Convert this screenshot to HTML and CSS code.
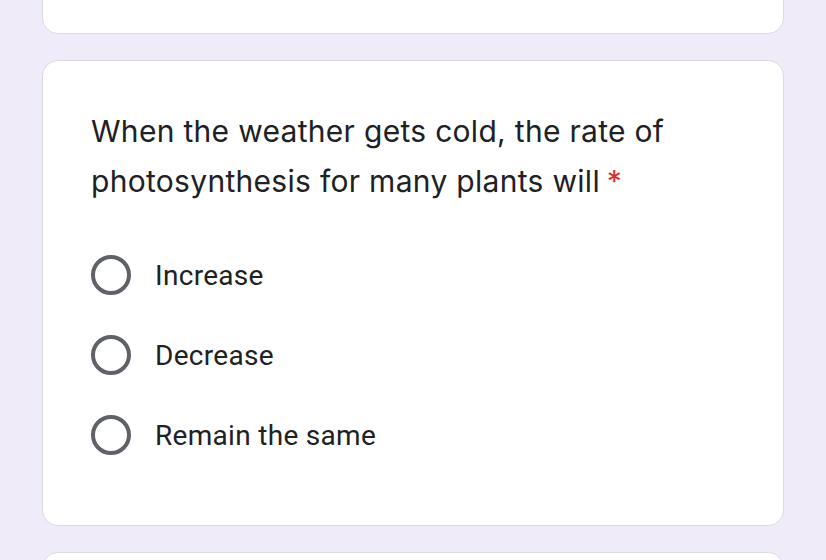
FILE: index.html
```html
<!DOCTYPE html>
<html>
<head>
<meta charset="utf-8">
<link rel="stylesheet" href="styles.css">
</head>
<body>
<main class="form">
  <div class="card card-prev"></div>
  <section class="card card-question">
    <h2 class="title">When the weather gets cold, the rate of photosynthesis for many plants will <span class="req">*</span></h2>
    <div class="options">
      <label class="option"><span class="radio"></span><span class="label">Increase</span></label>
      <label class="option"><span class="radio"></span><span class="label">Decrease</span></label>
      <label class="option"><span class="radio"></span><span class="label">Remain the same</span></label>
    </div>
  </section>
  <div class="card card-next"></div>
</main>
</body>
</html>
```
FILE: styles.css
```css
html, body {
  margin: 0;
  padding: 0;
  background: #f0ebf8;
  height: 560px;
  overflow: hidden;
}
.form {
  width: 742px;
  margin-left: 42px;
  display: flex;
  flex-direction: column;
  gap: 26px;
}
.card {
  background: #fff;
  border: 1px solid #dadce0;
  border-radius: 16px;
  box-sizing: border-box;
}
.card-prev {
  height: 60px;
  margin-top: -26px;
}
.card-question {
  height: 466px;
  padding: 45px 48px 0 48px;
}
.card-next {
  height: 34px;
}
.title {
  margin: 0;
  font-family: "Inter", "Roboto", sans-serif;
  font-weight: 400;
  font-size: 30px;
  line-height: 50px;
  letter-spacing: 0.3px;
  color: #202124;
  width: 620px;
}
.req {
  color: #d93025;
  margin-left: -2px;
}
.options {
  margin-top: 29px;
  display: flex;
  flex-direction: column;
}
.option {
  height: 80px;
  display: flex;
  align-items: center;
  gap: 24px;
}
.radio {
  width: 40px;
  height: 40px;
  box-sizing: border-box;
  border: 4px solid #5f6368;
  border-radius: 50%;
  flex: none;
}
.label {
  font-family: "Roboto", sans-serif;
  font-size: 28px;
  color: #202124;
  letter-spacing: 0.3px;
}
```
